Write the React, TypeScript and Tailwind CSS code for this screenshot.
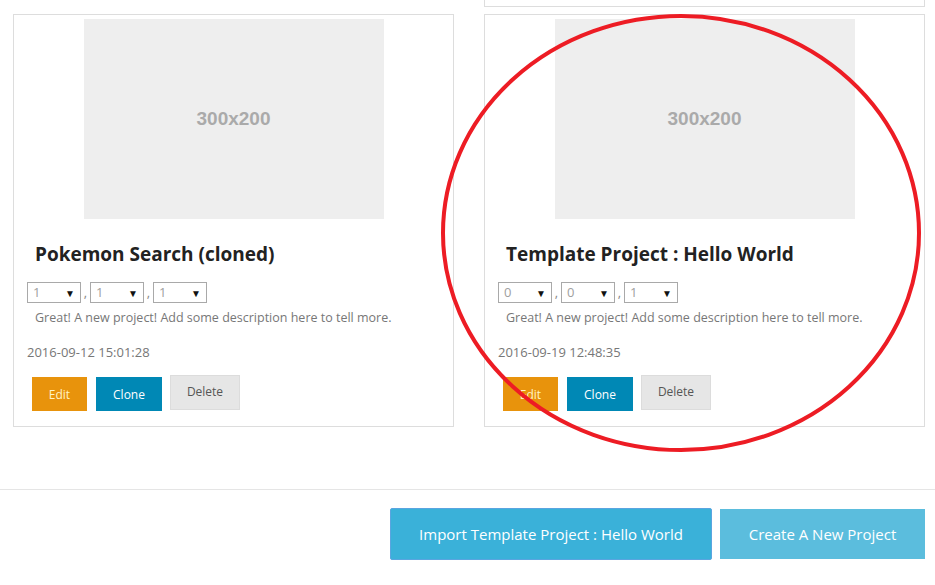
import React from 'react'

type Project = {
  title: string
  version: string[]
  description: string
  date: string
}

const PROJECTS: Project[] = [
  {
    title: 'Pokemon Search (cloned)',
    version: ['1', '1', '1'],
    description: 'Great! A new project! Add some description here to tell more.',
    date: '2016-09-12 15:01:28',
  },
  {
    title: 'Template Project : Hello World',
    version: ['0', '0', '1'],
    description: 'Great! A new project! Add some description here to tell more.',
    date: '2016-09-19 12:48:35',
  },
]

function VersionSelect({ value }: { value: string }) {
  return (
    <div className="flex h-[21px] w-[54px] items-center justify-between border border-[#a9a9a9] bg-white pl-[5px] pr-[5px]">
      <span className="text-[13px] leading-none text-[#a0a0a0]">{value}</span>
      <span className="text-[10px] leading-none text-[#111]">▼</span>
    </div>
  )
}

function ProjectCard({ project }: { project: Project }) {
  return (
    <div className="flex flex-col border border-[#dddddd] bg-white pb-[15px] pt-[4px]">
      {/* placeholder image */}
      <div className="mx-auto flex h-[200px] w-[300px] items-center justify-center bg-[#eeeeee]">
        <span className="font-['Liberation_Sans',Arial,sans-serif] text-[19px] font-bold text-[#aaaaaa]">300x200</span>
      </div>

      <h3 className="mt-[21px] h-[28px] pl-[21px] text-[19px] font-bold leading-[28px] text-[#222]">
        {project.title}
      </h3>

      <div className="mt-[14px] flex items-center pl-[13px] text-[13px] text-[#888]">
        {project.version.map((v, i) => (
          <React.Fragment key={i}>
            {i > 0 && <span className="w-[9px] text-center">,</span>}
            <VersionSelect value={v} />
          </React.Fragment>
        ))}
      </div>

      <p className="mt-[5px] pl-[21px] text-[12.5px] leading-[20px] text-[#777]">{project.description}</p>

      <p className="mt-[14px] pl-[13px] text-[13px] leading-[20px] text-[#777]">{project.date}</p>

      <div className="mt-[13px] flex items-start pl-[18px]">
        <button className="mt-[2px] h-[34px] w-[55px] bg-[#e8930c] pt-[1px] text-[12px] text-[#fff3c4]">Edit</button>
        <button className="ml-[9px] mt-[2px] h-[34px] w-[66px] bg-[#0088b5] pt-[1px] text-[12px] text-white">Clone</button>
        <button className="ml-[8px] h-[35px] w-[70px] border border-[#dcdcdc] bg-[#e6e6e6] pb-[1px] text-[12px] text-[#555]">
          Delete
        </button>
      </div>
    </div>
  )
}

export default function App() {
  return (
    <div className="relative h-[585px] w-[935px] overflow-hidden bg-white font-['Open_Sans','Liberation_Sans',sans-serif]">
      <div className="grid grid-cols-[441px_441px] gap-x-[30px] pl-[13px]">
        <div className="pt-[14px]">
          <ProjectCard project={PROJECTS[0]} />
        </div>
        <div>
          {/* bottom edge of the previous card */}
          <div className="h-[7px] border-x border-b border-[#dddddd]" />
          <div className="pt-[7px]">
            <ProjectCard project={PROJECTS[1]} />
          </div>
        </div>
      </div>

      <div className="mt-[62px] border-t border-[#e5e5e5]" />

      <div className="mt-[18px] flex items-center justify-end gap-[8px] pr-[10px]">
        <button className="h-[52px] w-[322px] rounded-[2px] border border-[#5aa5e0] bg-[#3ab1d9] text-[15px] text-white">
          Import Template Project : Hello World
        </button>
        <button className="h-[50px] w-[205px] bg-[#5bbddd] text-[15px] text-white">Create A New Project</button>
      </div>

      {/* red annotation circle */}
      <svg className="pointer-events-none absolute left-0 top-0" width="935" height="585">
        <ellipse cx="681" cy="233" rx="238" ry="217" fill="none" stroke="#ed1c24" strokeWidth="4" />
      </svg>
    </div>
  )
}
